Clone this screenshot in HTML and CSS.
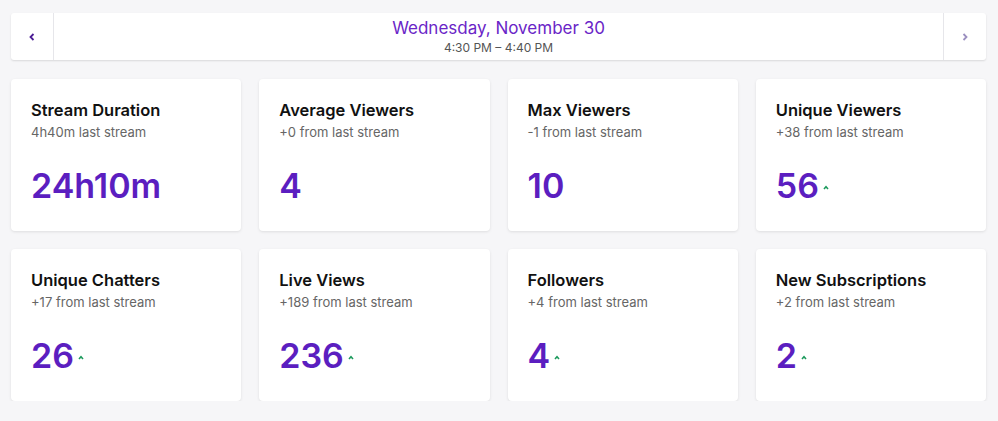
FILE: index.html
```html
<!DOCTYPE html>
<html lang="en">

<head>
    <meta charset="UTF-8">
    <meta name="viewport" content="width=device-width, initial-scale=1.0">
    <title>Stream Stats</title>
    <link rel="stylesheet" href="styles.css">
</head>

<body>
    <nav class="date-nav">
        <button class="nav-btn">
            <svg width="6" height="8" viewBox="0 0 6 8"><path d="M4.5 1 L1.5 4 L4.5 7" fill="none" stroke="currentColor" stroke-width="1.8"/></svg>
        </button>
        <div class="date-info">
            <div class="date-title">Wednesday, November 30</div>
            <div class="date-time">4:30 PM – 4:40 PM</div>
        </div>
        <button class="nav-btn disabled">
            <svg width="6" height="8" viewBox="0 0 6 8"><path d="M1.5 1 L4.5 4 L1.5 7" fill="none" stroke="currentColor" stroke-width="1.8"/></svg>
        </button>
    </nav>

    <section class="stats">
        <div class="card">
            <div class="card-title">Stream Duration</div>
            <div class="card-sub">4h40m last stream</div>
            <div class="card-value">24h10m</div>
        </div>
        <div class="card">
            <div class="card-title">Average Viewers</div>
            <div class="card-sub">+0 from last stream</div>
            <div class="card-value">4</div>
        </div>
        <div class="card">
            <div class="card-title">Max Viewers</div>
            <div class="card-sub">-1 from last stream</div>
            <div class="card-value">10</div>
        </div>
        <div class="card">
            <div class="card-title">Unique Viewers</div>
            <div class="card-sub">+38 from last stream</div>
            <div class="card-value">56 <svg class="up" width="6" height="5" viewBox="0 0 6 5"><path d="M1 4 L3 1.8 L5 4" fill="none" stroke="currentColor" stroke-width="1.6"/></svg></div>
        </div>
        <div class="card">
            <div class="card-title">Unique Chatters</div>
            <div class="card-sub">+17 from last stream</div>
            <div class="card-value">26 <svg class="up" width="6" height="5" viewBox="0 0 6 5"><path d="M1 4 L3 1.8 L5 4" fill="none" stroke="currentColor" stroke-width="1.6"/></svg></div>
        </div>
        <div class="card">
            <div class="card-title">Live Views</div>
            <div class="card-sub">+189 from last stream</div>
            <div class="card-value">236 <svg class="up" width="6" height="5" viewBox="0 0 6 5"><path d="M1 4 L3 1.8 L5 4" fill="none" stroke="currentColor" stroke-width="1.6"/></svg></div>
        </div>
        <div class="card">
            <div class="card-title">Followers</div>
            <div class="card-sub">+4 from last stream</div>
            <div class="card-value">4 <svg class="up" width="6" height="5" viewBox="0 0 6 5"><path d="M1 4 L3 1.8 L5 4" fill="none" stroke="currentColor" stroke-width="1.6"/></svg></div>
        </div>
        <div class="card">
            <div class="card-title">New Subscriptions</div>
            <div class="card-sub">+2 from last stream</div>
            <div class="card-value">2 <svg class="up" width="6" height="5" viewBox="0 0 6 5"><path d="M1 4 L3 1.8 L5 4" fill="none" stroke="currentColor" stroke-width="1.6"/></svg></div>
        </div>
    </section>
</body>

</html>
```

FILE: styles.css
```css
body {
    font-family: Inter, "Noto Sans", sans-serif;
    margin: 0;
    padding: 13px 12px 0 11px;
    box-sizing: border-box;
    background-color: #f6f6f8;
}

.date-nav {
    display: flex;
    height: 47px;
    background-color: #fff;
    border-radius: 3px;
    box-shadow: 0 1px 2px rgba(0, 0, 0, 0.12);
}

.nav-btn {
    width: 43px;
    border: none;
    background: none;
    padding: 0;
    display: flex;
    align-items: center;
    justify-content: center;
    color: #4c1d95;
    cursor: pointer;
}

.nav-btn:first-child {
    border-right: 1px solid #e6e6ea;
}

.nav-btn:last-child {
    border-left: 1px solid #e6e6ea;
}

.nav-btn.disabled {
    color: #9b8fc0;
}

.date-info {
    flex: 1;
    text-align: center;
    padding-top: 3px;
}

.date-title {
    color: #6a25c7;
    font-size: 17px;
    line-height: 24px;
}

.date-time {
    color: #555;
    font-size: 12px;
    line-height: 15px;
}

.stats {
    display: grid;
    grid-template-columns: repeat(4, 1fr);
    gap: 18px 18px;
    margin-top: 19px;
}

.card {
    background-color: #fff;
    height: 152px;
    border-radius: 4px;
    box-shadow: 0 1px 3px rgba(0, 0, 0, 0.1);
    padding: 20px 20px 0;
    box-sizing: border-box;
}

.card-title {
    font-size: 16.5px;
    font-weight: 600;
    color: #111;
    line-height: 22px;
}

.card-sub {
    font-size: 13px;
    color: #666;
    line-height: 22px;
}

.card-value {
    margin-top: 21px;
    font-size: 34px;
    font-weight: 600;
    color: #5b1ec0;
    line-height: 44px;
    display: flex;
    align-items: center;
}

.up {
    margin-left: 4px;
    margin-top: 3px;
    color: #1c9a5c;
}
```
